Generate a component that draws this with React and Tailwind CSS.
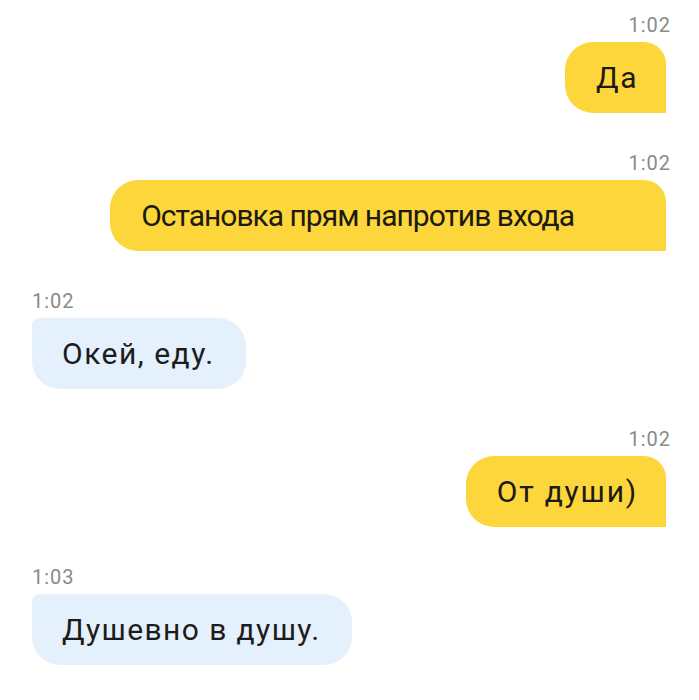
import React from 'react';

const messages = [
  { id: 1, time: '1:02', text: 'Да', out: true, tracking: 'tracking-[1.5px]' },
  { id: 2, time: '1:02', text: 'Остановка прям напротив входа', out: true, wide: true, tracking: 'tracking-[-1px]' },
  { id: 3, time: '1:02', text: 'Окей, еду.', out: false, tracking: 'tracking-[1.5px]' },
  { id: 4, time: '1:02', text: 'От души)', out: true, tracking: 'tracking-[1.8px]' },
  { id: 5, time: '1:03', text: 'Душевно в душу.', out: false, tracking: 'tracking-[1.4px]' },
];

function Message({ msg }) {
  if (msg.out) {
    return (
      <div className="flex flex-col items-end">
        <div className="h-[22px] mr-[-5px] text-[20px] leading-[22px] tracking-[1px] text-[#8a8a8a]">{msg.time}</div>
        <div
          className={
            'mt-[6px] h-[71px] flex items-center rounded-[28px] rounded-tr-[22px] rounded-br-none bg-[#fcd63b] text-[30px] text-[#1c1a12] pl-[31px] ' +
            msg.tracking + ' ' +
            (msg.wide ? 'pr-[92px]' : 'pr-[28px]')
          }
        >
          {msg.text}
        </div>
      </div>
    );
  }
  return (
    <div className="flex flex-col items-start">
      <div className="h-[22px] text-[20px] leading-[22px] tracking-[1px] text-[#8a8a8a]">{msg.time}</div>
      <div
        className={
          'mt-[6px] h-[71px] flex items-center rounded-[28px] rounded-tl-[8px] bg-[#e4f0fb] text-[30px] text-[#1c1c1c] pl-[30px] pr-[31px] ' +
          msg.tracking
        }
      >
        {msg.text}
      </div>
    </div>
  );
}

export default function App() {
  return (
    <div
      className="w-[699px] h-[700px] bg-white pt-[14px] pl-[32px] pr-[33px] flex flex-col gap-[39px]"
      style={{ fontFamily: 'Roboto, "Noto Sans", sans-serif' }}
    >
      {messages.map((m) => (
        <Message key={m.id} msg={m} />
      ))}
    </div>
  );
}
